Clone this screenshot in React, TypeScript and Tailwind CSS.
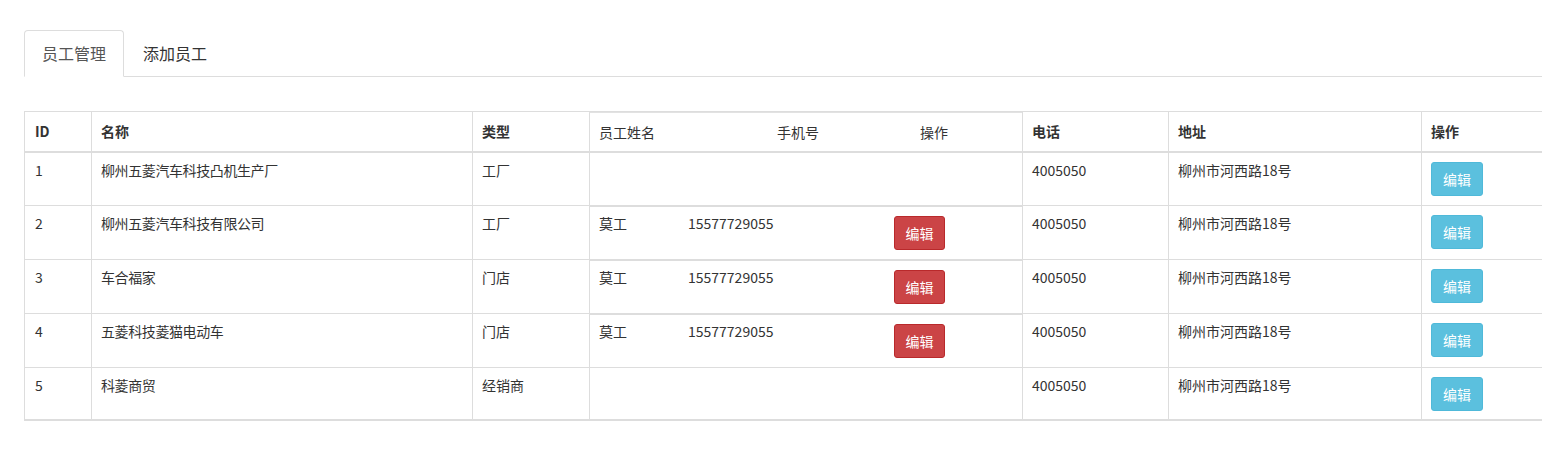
import React from 'react';

type Staff = { name: string; phone: string };
type Row = { id: number; name: string; kind: string; staff?: Staff; tel: string; addr: string };

const rows: Row[] = [
    { id: 1, name: '柳州五菱汽车科技凸机生产厂', kind: '工厂', tel: '4005050', addr: '柳州市河西路18号' },
    { id: 2, name: '柳州五菱汽车科技有限公司', kind: '工厂', staff: { name: '莫工', phone: '15577729055' }, tel: '4005050', addr: '柳州市河西路18号' },
    { id: 3, name: '车合福家', kind: '门店', staff: { name: '莫工', phone: '15577729055' }, tel: '4005050', addr: '柳州市河西路18号' },
    { id: 4, name: '五菱科技菱猫电动车', kind: '门店', staff: { name: '莫工', phone: '15577729055' }, tel: '4005050', addr: '柳州市河西路18号' },
    { id: 5, name: '科菱商贸', kind: '经销商', tel: '4005050', addr: '柳州市河西路18号' },
];

// every cell draws its own left border
const cellBase = 'border-l border-[#ddd] shrink-0';

function EditButton({ color }: { color: 'red' | 'blue' }) {
    const cls =
        color === 'red'
            ? 'w-[51px] bg-[#cb4446] border-[#b9292b]'
            : 'w-[52px] bg-[#5bc0de] border-[#4fb9d9]';
    return (
        <button
            type="button"
            className={`${cls} h-[34px] border rounded-[3px] text-white text-[14px] leading-[20px] flex items-center justify-center`}
        >
            编辑
        </button>
    );
}

function HeaderRow() {
    return (
        <div className="flex h-[41px] border-b-2 border-[#ddd] font-bold">
            <div className={`${cellBase} w-[67px] pl-[10px] pb-[2px] flex items-center`}>ID</div>
            <div className={`${cellBase} w-[381px] pl-[9px] pb-[2px] flex items-center`}>名称</div>
            <div className={`${cellBase} w-[117px] pl-[9px] pb-[2px] flex items-center`}>类型</div>
            <div className={`${cellBase} w-[433px] flex font-normal border-t border-t-[#e2e2e2] pb-[1px]`}>
                <div className="w-[177px] pl-[9px] flex items-center">员工姓名</div>
                <div className="w-[143px] pl-[10px] flex items-center">手机号</div>
                <div className="pl-[10px] flex items-center">操作</div>
            </div>
            <div className={`${cellBase} w-[146px] pl-[9px] pb-[2px] flex items-center`}>电话</div>
            <div className={`${cellBase} w-[253px] pl-[9px] pb-[2px] flex items-center`}>地址</div>
            <div className={`${cellBase} w-[160px] pl-[9px] pb-[2px] flex items-center`}>操作</div>
        </div>
    );
}

function DataRow({ row, last, first }: { row: Row; last: boolean; first: boolean }) {
    const h = first ? 'h-[53px] border-b' : last ? 'h-[53px] border-b-2' : 'h-[54px] border-b';
    return (
        <div className={`flex ${h} border-[#ddd]`}>
            <div className={`${cellBase} w-[67px] pl-[10px] pt-[7px]`}>{row.id}</div>
            <div className={`${cellBase} w-[381px] pl-[9px] pt-[7px] tracking-[-0.4px]`}>{row.name}</div>
            <div className={`${cellBase} w-[117px] pl-[9px] pt-[7px]`}>{row.kind}</div>
            <div className={`${cellBase} w-[433px]`}>
                {row.staff && (
                    <div className="flex h-full border-t border-[#ddd]">
                        <div className="w-[88px] pl-[9px] pt-[6px]">{row.staff.name}</div>
                        <div className="w-[206px] pl-[10px] pt-[6px]">{row.staff.phone}</div>
                        <div className="pl-[10px] pt-[9px]">
                            <EditButton color="red" />
                        </div>
                    </div>
                )}
            </div>
            <div className={`${cellBase} w-[146px] pl-[9px] pt-[7px]`}>{row.tel}</div>
            <div className={`${cellBase} w-[253px] pl-[9px] pt-[7px]`}>{row.addr}</div>
            <div className={`${cellBase} w-[160px] pl-[9px] pt-[9px]`}>
                <EditButton color="blue" />
            </div>
        </div>
    );
}

export default function App() {
    return (
        <div
            className="w-full min-h-[459px] bg-white overflow-hidden pt-[30px] text-[#333] text-[14px] leading-[20px]"
            style={{ fontFamily: '"Noto Sans CJK SC", "Noto Sans", sans-serif' }}
        >
            {/* Tabs */}
            <div className="ml-[24px] flex border-b border-[#ddd]">
                <div className="-mb-px px-[17px] pt-[10px] pb-[11px] text-[16px] leading-[24px] text-[#555] bg-white border border-[#ddd] border-b-white rounded-t-[4px]">
                    员工管理
                </div>
                <div className="-mb-px ml-[1px] px-[17px] pt-[10px] pb-[11px] text-[16px] leading-[24px] text-[#333] border border-transparent">
                    添加员工
                </div>
            </div>

            {/* Table */}
            <div className="mt-[34px] ml-[24px] w-[1560px] border-t border-[#ddd]">
                <HeaderRow />
                {rows.map((r, i) => (
                    <DataRow key={r.id} row={r} first={i === 0} last={i === rows.length - 1} />
                ))}
            </div>
        </div>
    );
}
